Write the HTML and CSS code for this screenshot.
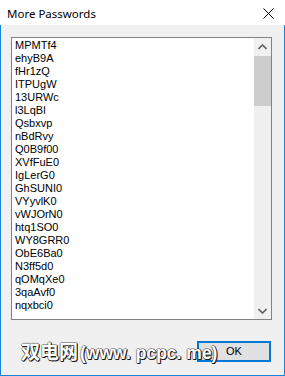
FILE: index.html
```html
<!DOCTYPE html>
<html>
<head>
<meta charset="utf-8">
<link rel="stylesheet" href="styles.css">
</head>
<body>
<div class="window">
  <div class="titlebar">
    <span class="title">More Passwords</span>
    <svg class="close" width="11" height="11" viewBox="0 0 11 11"><path d="M0.5 0.5 L10.5 10.5 M10.5 0.5 L0.5 10.5" stroke="#000" stroke-width="1" fill="none"/></svg>
  </div>
  <div class="client">
    <div class="listbox">
      <div class="items">
        <div class="item">MPMTf4</div>
        <div class="item">ehyB9A</div>
        <div class="item">fHr1zQ</div>
        <div class="item">ITPUgW</div>
        <div class="item">13URWc</div>
        <div class="item">l3LqBl</div>
        <div class="item">Qsbxvp</div>
        <div class="item">nBdRvy</div>
        <div class="item">Q0B9f00</div>
        <div class="item">XVfFuE0</div>
        <div class="item">IgLerG0</div>
        <div class="item">GhSUNI0</div>
        <div class="item">VYyvlK0</div>
        <div class="item">vWJOrN0</div>
        <div class="item">htq1SO0</div>
        <div class="item">WY8GRR0</div>
        <div class="item">ObE6Ba0</div>
        <div class="item">N3ff5d0</div>
        <div class="item">qOMqXe0</div>
        <div class="item">3qaAvf0</div>
        <div class="item">nqxbci0</div>
      </div>
      <div class="scrollbar">
        <div class="arrow"><svg width="9" height="6" viewBox="0 0 9 6"><path d="M0.5 5 L4.5 1 L8.5 5" stroke="#606060" stroke-width="1.6" fill="none"/></svg></div>
        <div class="track"><div class="thumb"></div></div>
        <div class="arrow"><svg width="9" height="6" viewBox="0 0 9 6"><path d="M0.5 1 L4.5 5 L8.5 1" stroke="#606060" stroke-width="1.6" fill="none"/></svg></div>
      </div>
    </div>
    <div class="footer">
      <div class="ok">OK</div>
    </div>
    <div class="watermark"><span class="wm-cjk">双电网</span><span class="wm-latin">(www. pcpc. me)</span></div>
  </div>
</div>
</body>
</html>
```
FILE: styles.css
```css
html, body {
  margin: 0;
  padding: 0;
}
body {
  width: 285px;
  height: 376px;
  overflow: hidden;
  background: #f0f0f0;
}
.window {
  width: 285px;
  height: 376px;
  display: flex;
  flex-direction: column;
}
.titlebar {
  height: 25px;
  background: #ffffff;
  display: flex;
  align-items: center;
  justify-content: space-between;
  padding: 0 11px 0 7px;
  flex: none;
}
.title {
  font-family: "Noto Sans", "Open Sans", sans-serif;
  font-size: 11.5px;
  color: #000;
  margin-top: 1px;
}
.close {
  display: block;
  margin-top: 1px;
}
.client {
  position: relative;
  flex: 1;
  background: #f0f0f0;
  border: 1px solid #1883d7;
  border-top: none;
  padding: 12px 12px 0 10px;
  display: flex;
  flex-direction: column;
}
.listbox {
  height: 283px;
  box-sizing: border-box;
  border: 1px solid #828282;
  background: #fff;
  display: flex;
}
.items {
  flex: 1;
  padding: 1px 0 0 3px;
  font-family: "Liberation Sans", Arial, sans-serif;
  font-size: 11px;
  line-height: 13px;
  color: #000;
}
.scrollbar {
  width: 17px;
  background: #f0f0f0;
  display: flex;
  flex-direction: column;
}
.arrow {
  height: 17px;
  display: flex;
  align-items: center;
  justify-content: center;
}
.arrow svg {
  display: block;
}
.track {
  flex: 1;
  padding: 1px 0 0 0;
}
.thumb {
  height: 50px;
  background: #cdcdcd;
}
.footer {
  display: flex;
  justify-content: flex-end;
  margin-top: 21px;
  padding-right: 1px;
}
.ok {
  width: 74px;
  height: 21px;
  box-sizing: border-box;
  border: 2px solid #0078d7;
  background: #e1e1e1;
  font-family: "Liberation Sans", Arial, sans-serif;
  font-size: 11px;
  line-height: 17px;
  text-align: center;
  color: #000;
}
.watermark {
  position: absolute;
  left: 20px;
  top: 315px;
  font-weight: bold;
  line-height: 22px;
  color: #fff;
  white-space: nowrap;
  text-shadow: 1px 1px 0 #1a1a1a, 1px 0 0 #333, 0 1px 0 #333, -1px 0 0 rgba(0,0,0,0.35), 0 -1px 0 rgba(0,0,0,0.35);
}
.wm-cjk {
  font-family: "Noto Sans CJK SC", sans-serif;
  font-size: 19px;
  margin-right: 2px;
}
.wm-latin {
  font-family: "Liberation Sans", "Noto Sans CJK SC", sans-serif;
  font-size: 17.5px;
}
```
